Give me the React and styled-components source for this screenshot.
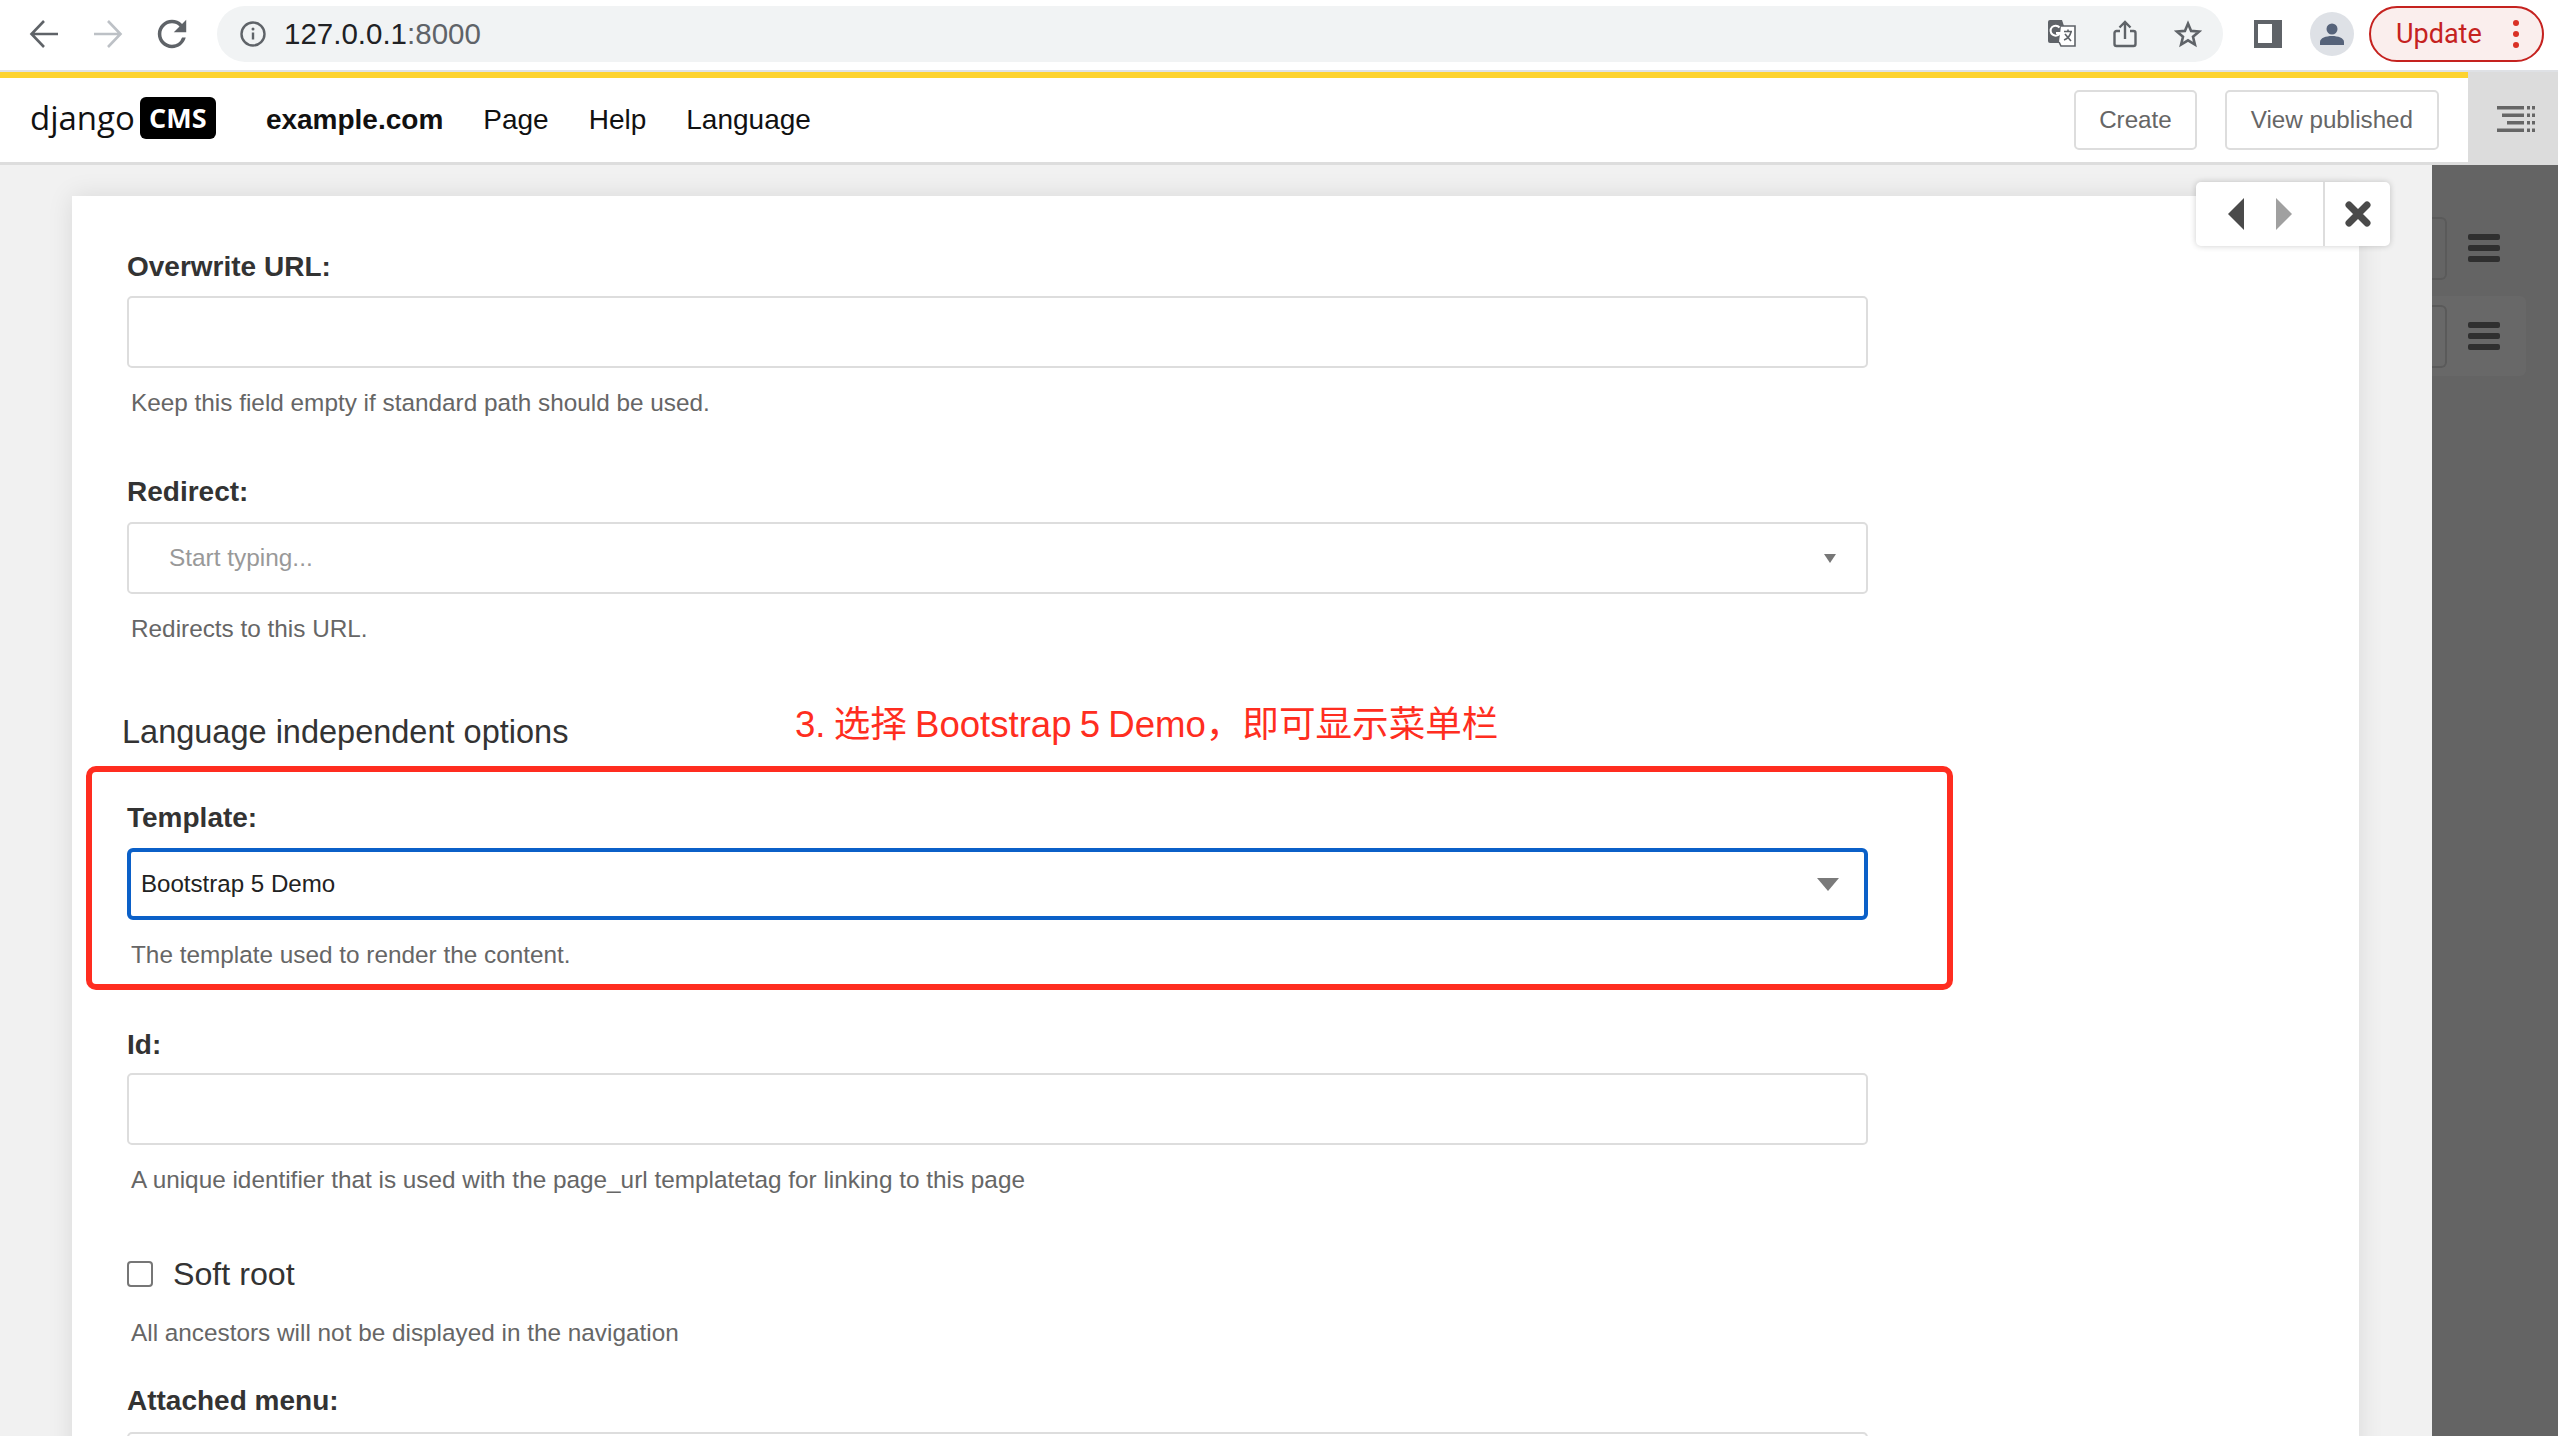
import React from 'react'
import styled, { createGlobalStyle } from 'styled-components'

const Global = createGlobalStyle`
    html, body {
        margin: 0;
        padding: 0;
        background: #f1f1f1;
    }
    * {
        box-sizing: border-box;
    }
    body {
        font-family: "Liberation Sans", Arial, sans-serif;
    }
`

const Page = styled.div`
    width: 2558px;
    height: 1436px;
    overflow: hidden;
    display: flex;
    flex-direction: column;
`

/* browser chrome */
const Browser = styled.div`
    height: 72px;
    flex: none;
    display: flex;
    align-items: center;
    padding: 0 0 2px 28px;
    background: #fff;
    border-bottom: 2px solid #dfe1e5;
`
const NavButtons = styled.div`
    display: flex;
    gap: 32px;

    svg {
        width: 32px;
        height: 32px;
        display: block;
    }
`
const AddressBar = styled.div`
    width: 2006px;
    height: 56px;
    margin-left: 29px;
    padding: 0 21px 0 23px;
    display: flex;
    align-items: center;
    border-radius: 28px;
    background: #f1f3f4;
`
const Url = styled.span`
    margin-left: 18px;
    font-size: 29.5px;
    color: #202124;

    span {
        color: #5f6368;
    }
`
const BarIcons = styled.div`
    margin-left: auto;
    display: flex;
    align-items: center;
    gap: 35px;

    svg {
        width: 28px;
        height: 28px;
        display: block;
    }
`
const SidePanelIcon = styled.div`
    width: 28px;
    height: 28px;
    margin-left: 31px;
    background: #5f6368;
    padding: 4px 10px 5px 4px;

    &::before {
        content: "";
        display: block;
        height: 100%;
        background: #fff;
    }
`
const Avatar = styled.div`
    width: 44px;
    height: 44px;
    margin-left: 28px;
    border-radius: 50%;
    background: #dee1e6;
    display: flex;
    align-items: center;
    justify-content: center;

    svg {
        width: 28px;
        height: 28px;
    }
`
const UpdatePill = styled.div`
    width: 175px;
    height: 56px;
    margin-left: 15px;
    padding-left: 25px;
    display: flex;
    align-items: center;
    border: 2px solid #c5221f;
    border-radius: 28px;
    background: #faeeed;
    color: #c5221f;
    font-family: Roboto, "Liberation Sans", sans-serif;
    font-size: 27px;
`
const MenuDots = styled.div`
    margin-left: 31px;
    display: flex;
    flex-direction: column;
    gap: 5px;

    i {
        display: block;
        width: 6px;
        height: 6px;
        border-radius: 50%;
        background: #d93025;
    }
`

/* cms toolbar */
const Header = styled.div`
    height: 93px;
    flex: none;
    display: flex;
    position: relative;
    z-index: 2;
`
const Toolbar = styled.div`
    flex: 1;
    display: flex;
    align-items: center;
    padding: 0 29px 0 30px;
    background: #fff;
    border-top: 6px solid #fdd330;
    border-bottom: 3px solid #ddd;
`
const Logo = styled.div`
    display: flex;
    align-items: center;
    gap: 5px;
    margin-bottom: 5px;
    font-family: "Open Sans", sans-serif;
    font-size: 33px;
    color: #111;
`
const LogoBadge = styled.span`
    width: 76px;
    height: 42px;
    border-radius: 6px;
    display: flex;
    align-items: center;
    justify-content: center;
    background: #000;
    color: #fff;
    font-size: 27px;
    font-weight: 700;
`
const NavMenu = styled.nav`
    margin-left: 50px;
    margin-bottom: 1px;
    display: flex;
    gap: 40px;
    font-size: 28px;
    color: #111;
`
const SiteLink = styled.span`
    font-weight: 700;
`
const ToolbarActions = styled.div`
    margin-left: auto;
    display: flex;
    gap: 28px;
`
const ToolbarButton = styled.div`
    height: 60px;
    padding: 0 ${p => p.$pad}px;
    display: flex;
    align-items: center;
    border: 2px solid #ddd;
    border-radius: 5px;
    color: #666;
    font-size: 24.2px;
`
const StructureToggle = styled.div`
    width: 90px;
    flex: none;
    background: #dcdcdc;
    display: flex;
    align-items: center;
    padding-left: 29px;

    svg {
        width: 38px;
        height: 26px;
        display: block;
    }
`

/* page body */
const Body = styled.div`
    flex: 1;
    min-height: 0;
    display: flex;
`
const Main = styled.div`
    flex: 1;
    position: relative;
    padding: 31px 0 0 72px;
    background: #f1f1f1;
`
const Card = styled.div`
    width: 2287px;
    height: 1400px;
    padding: 52px 0 0 55px;
    background: #fff;
    box-shadow: 0 0 24px rgba(0, 0, 0, 0.1);
`
const Field = styled.div`
    width: 1741px;
    position: relative;
    margin-bottom: ${p => p.$after ?? 54}px;
`
const Label = styled.div`
    height: 36px;
    line-height: 38px;
    margin-bottom: ${p => p.$gap ?? 12}px;
    font-size: 28px;
    font-weight: 700;
    color: #333;
`
const Input = styled.div`
    height: 72px;
    display: flex;
    align-items: center;
    justify-content: space-between;
    padding: 0 30px 0 40px;
    border: 2px solid #ddd;
    border-radius: 5px;
    background: #fff;
    color: #999;
    font-size: 24.4px;
`
const TemplateSelect = styled(Input)`
    padding: 0 25px 0 10px;
    border: 4px solid #0b60c8;
    border-radius: 6px;
    color: #222;
    font-size: 24.1px;
`
const Caret = styled.span`
    width: 0;
    height: 0;
    border-style: solid;
    border-color: ${p => p.$color} transparent transparent;
    border-width: ${p => p.$h}px ${p => p.$w}px 0;
`
const Help = styled.div`
    height: 32px;
    line-height: 32px;
    margin: ${p => p.$top ?? 19}px 0 0 4px;
    font-size: 24.33px;
    color: #666;
`
const SectionTitle = styled.div`
    height: 40px;
    line-height: 40px;
    margin: 67px 0 47px -5px;
    font-size: 32.5px;
    color: #333;
`
const CheckRow = styled.div`
    height: 40px;
    display: flex;
    align-items: center;
    gap: 20px;
    font-size: 32.2px;
    color: #333;
`
const Checkbox = styled.span`
    width: 26px;
    height: 26px;
    border: 2px solid #767676;
    border-radius: 4px;
    background: #fff;
`

/* red annotation drawn over the form */
const RedFrame = styled.div`
    position: absolute;
    left: -41px;
    top: -33px;
    width: 1867px;
    height: 224px;
    border: 6px solid #ff2d20;
    border-radius: 10px;
    pointer-events: none;
`
const Caption = styled.div`
    position: absolute;
    left: 668px;
    top: -96px;
    white-space: nowrap;
    font-family: "Liberation Sans", "Noto Sans CJK SC", sans-serif;
    font-size: 36.6px;
    word-spacing: -2px;
    line-height: 44px;
    color: #ff2d20;
`

/* floating prev / next / close */
const FramePager = styled.div`
    position: absolute;
    top: 17px;
    right: 42px;
    width: 194px;
    height: 64px;
    display: flex;
    background: #fff;
    border-radius: 5px;
    box-shadow: 0 0 6px rgba(0, 0, 0, 0.2);
`
const PagerArrows = styled.div`
    width: 129px;
    display: flex;
    align-items: center;
    justify-content: center;
    gap: 32px;
    border-right: 2px solid #ddd;
`
const Triangle = styled.span`
    width: 0;
    height: 0;
    border-style: solid;
    border-color: transparent;
    border-width: 16px 0;
    border-left: ${p => (p.$left ? '0' : `16px solid ${p.$color}`)};
    border-right: ${p => (p.$left ? `16px solid ${p.$color}` : '0')};
`
const PagerClose = styled.div`
    flex: 1;
    display: flex;
    align-items: center;
    justify-content: center;

    svg {
        width: 26px;
        height: 26px;
    }
`

/* dark structure panel */
const Panel = styled.aside`
    width: 126px;
    flex: none;
    padding-top: 43px;
    display: flex;
    flex-direction: column;
    gap: 8px;
    background: #646464;
`
const PanelRow = styled.div`
    width: 94px;
    height: 80px;
    padding: 9px 0;
    display: flex;
    align-items: center;
    gap: 21px;
    border-radius: 0 6px 6px 0;
    background: ${p => (p.$active ? '#686868' : 'transparent')};
`
const RowGhost = styled.div`
    width: 15px;
    height: 63px;
    border: 2px solid #5a5a5a;
    border-left: 0;
    border-radius: 0 6px 6px 0;
`
const Burger = styled.div`
    display: flex;
    flex-direction: column;
    gap: 5px;

    i {
        display: block;
        width: 32px;
        height: 6px;
        border-radius: 2px;
        background: #2f2f2f;
    }
`

const Bars = () => (
    <Burger>
        <i />
        <i />
        <i />
    </Burger>
)

const App = () => {
    return (
        <Page>
            <Global />
            <Browser>
                <NavButtons>
                    <svg viewBox="0 0 32 32" fill="none" stroke="#5f6368" strokeWidth="2.6">
                        <path d="M30 16H4M16 3 3.5 16 16 29" />
                    </svg>
                    <svg viewBox="0 0 32 32" fill="none" stroke="#bdc1c6" strokeWidth="2.6">
                        <path d="M2 16h26M16 3l12.5 13L16 29" />
                    </svg>
                    <svg viewBox="3 3 18 18" fill="#5f6368">
                        <path d="M17.65 6.35A7.958 7.958 0 0 0 12 4c-4.42 0-7.99 3.58-7.99 8s3.57 8 7.99 8c3.73 0 6.84-2.55 7.73-6h-2.08A5.99 5.99 0 0 1 12 18c-3.31 0-6-2.69-6-6s2.69-6 6-6c1.66 0 3.14.69 4.22 1.78L13 11h7V4l-2.35 2.35z" />
                    </svg>
                </NavButtons>
                <AddressBar>
                    <svg width="26" height="26" viewBox="0 0 26 26" fill="none">
                        <circle cx="13" cy="13" r="11.5" stroke="#5f6368" strokeWidth="2.4" />
                        <path d="M13 11.5v7" stroke="#5f6368" strokeWidth="2.4" />
                        <circle cx="13" cy="8" r="1.5" fill="#5f6368" />
                    </svg>
                    <Url>127.0.0.1<span>:8000</span></Url>
                    <BarIcons>
                        <svg viewBox="0 0 28 28">
                            <path d="M2 0h12l3 9v14H2a2 2 0 0 1-2-2V2a2 2 0 0 1 2-2z" fill="#5f6368" />
                            <path d="M13 6h14v20H13l-2-4" fill="#fff" stroke="#5f6368" strokeWidth="1.6" />
                            <path d="M11.5 7.5A5 5 0 1 0 12 13H8" fill="none" stroke="#fff" strokeWidth="2" />
                            <path d="M16 11.5h8M20 9.5v2M23 12c-1 4-4 7-7 8M17 14l6 7" fill="none" stroke="#5f6368" strokeWidth="1.6" />
                        </svg>
                        <svg viewBox="0 0 28 28" fill="none" stroke="#5f6368" strokeWidth="2.4">
                            <path d="M9 11H5.5a2 2 0 0 0-2 2v11a2 2 0 0 0 2 2h17a2 2 0 0 0 2-2V13a2 2 0 0 0-2-2H19" />
                            <path d="M14 19V2M8.500 7.500 14 2l5.500 5.500" />
                        </svg>
                        <svg viewBox="0 0 28 28" fill="none" stroke="#5f6368" strokeWidth="2.6" strokeLinejoin="miter">
                            <path d="m14 3.500 3.100 7.400 8 .6-6.100 5.200 1.900 7.800L14 20.300l-6.900 4.200L9 16.700l-6.100-5.200 8-.6z" />
                        </svg>
                    </BarIcons>
                </AddressBar>
                <SidePanelIcon />
                <Avatar>
                    <svg viewBox="0 0 28 28" fill="#56637a">
                        <circle cx="14" cy="9" r="5.500" />
                        <path d="M2 25v-3c0-4 6-6 12-6s12 2 12 6v3z" />
                    </svg>
                </Avatar>
                <UpdatePill>
                    Update
                    <MenuDots>
                        <i />
                        <i />
                        <i />
                    </MenuDots>
                </UpdatePill>
            </Browser>

            <Header>
                <Toolbar>
                    <Logo>
                        django
                        <LogoBadge>CMS</LogoBadge>
                    </Logo>
                    <NavMenu>
                        <SiteLink>example.com</SiteLink>
                        <span>Page</span>
                        <span>Help</span>
                        <span>Language</span>
                    </NavMenu>
                    <ToolbarActions>
                        <ToolbarButton $pad={23}>Create</ToolbarButton>
                        <ToolbarButton $pad={24}>View published</ToolbarButton>
                    </ToolbarActions>
                </Toolbar>
                <StructureToggle>
                    <svg viewBox="0 0 38 26" fill="#666">
                        <path d="M0 0h27v3.500H0zM5 7.500h22V11H5zM10 15h17v3.500H10zM0 22.500h27V26H0z" />
                        <path d="M30 0h3v3.500h-3zM35 0h3v3.500h-3zM30 7.500h3V11h-3zM35 7.500h3V11h-3zM30 15h3v3.500h-3zM35 15h3v3.500h-3zM30 22.500h3V26h-3zM35 22.500h3V26h-3z" />
                    </svg>
                </StructureToggle>
            </Header>

            <Body>
                <Main>
                    <Card>
                        <Field>
                            <Label>Overwrite URL:</Label>
                            <Input />
                            <Help>Keep this field empty if standard path should be used.</Help>
                        </Field>
                        <Field>
                            <Label $gap={13}>Redirect:</Label>
                            <Input>
                                Start typing...
                                <Caret $color="#777" $w={6} $h={9} />
                            </Input>
                            <Help>Redirects to this URL.</Help>
                        </Field>
                        <SectionTitle>Language independent options</SectionTitle>
                        <Field $after={55}>
                            <Caption>3. 选择 Bootstrap 5 Demo，即可显示菜单栏</Caption>
                            <Label $gap={13}>Template:</Label>
                            <TemplateSelect>
                                Bootstrap 5 Demo
                                <Caret $color="#7a7a7a" $w={11} $h={13} />
                            </TemplateSelect>
                            <Help $top={19}>The template used to render the content.</Help>
                            <RedFrame />
                        </Field>
                        <Field $after={58}>
                            <Label $gap={11}>Id:</Label>
                            <Input />
                            <Help>A unique identifier that is used with the page_url templatetag for linking to this page</Help>
                        </Field>
                        <Field $after={33}>
                            <CheckRow>
                                <Checkbox />
                                Soft root
                            </CheckRow>
                            <Help $top={23}>All ancestors will not be displayed in the navigation</Help>
                        </Field>
                        <Field>
                            <Label $gap={14}>Attached menu:</Label>
                            <Input />
                        </Field>
                    </Card>
                    <FramePager>
                        <PagerArrows>
                            <Triangle $left $color="#4a4a4a" />
                            <Triangle $color="#a0a0a0" />
                        </PagerArrows>
                        <PagerClose>
                            <svg viewBox="0 0 26 26" stroke="#4a4a4a" strokeWidth="7" strokeLinecap="round">
                                <path d="M4 4l18 18M22 4 4 22" />
                            </svg>
                        </PagerClose>
                    </FramePager>
                </Main>
                <Panel>
                    <PanelRow>
                        <RowGhost />
                        <Bars />
                    </PanelRow>
                    <PanelRow $active>
                        <RowGhost />
                        <Bars />
                    </PanelRow>
                </Panel>
            </Body>
        </Page>
    )
}

export default App
